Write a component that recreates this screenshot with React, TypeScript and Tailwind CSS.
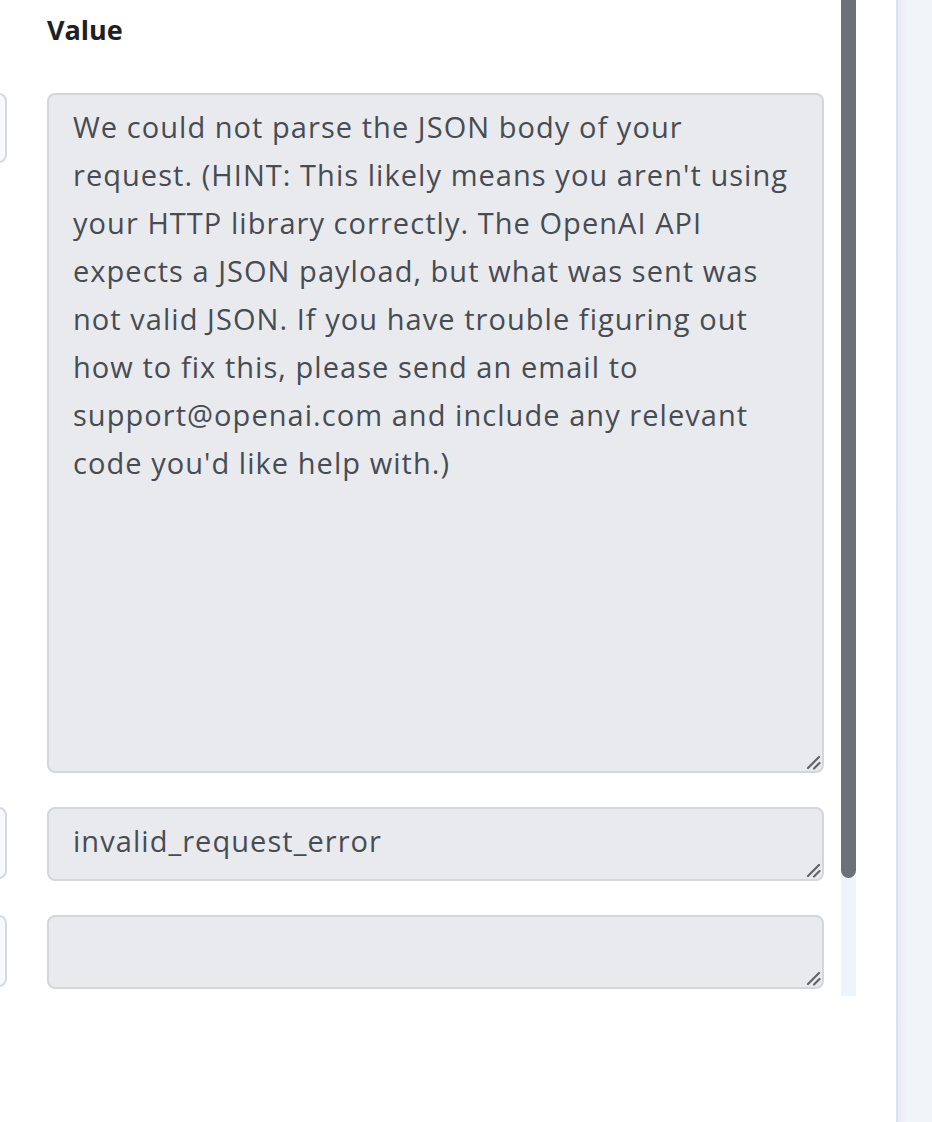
import React from 'react';

const message =
  "We could not parse the JSON body of your\nrequest. (HINT: This likely means you aren't using\nyour HTTP library correctly. The OpenAI API\nexpects a JSON payload, but what was sent was\nnot valid JSON. If you have trouble figuring out\nhow to fix this, please send an email to\nsupport@openai.com and include any relevant\ncode you'd like help with.)";

const fieldClass =
  "block w-full h-full resize-none overflow-hidden rounded-[8px] border-2 border-[#d3d6da] bg-[#e9eaee] pl-[24px] pr-[12px] pt-[8px] font-['Open_Sans','Liberation_Sans',sans-serif] text-[29px] tracking-[1.05px] leading-[48px] text-[#474c53] outline-none";

function KeyStub({ h }: { h: string }) {
  return <div className={`w-[200px] ml-[-193px] shrink-0 rounded-[8px] border-2 border-[#d6dadf] bg-[#f6f8fb] ${h}`} />;
}

function Field({ value, h }: { value: string; h: string }) {
  return (
    <div className={`relative w-[777px] shrink-0 ${h}`}>
      <textarea readOnly wrap="off" className={fieldClass} value={value} />
      {/* resize grip */}
      <svg className="absolute right-[3px] bottom-[3px] w-[15px] h-[15px] pointer-events-none" viewBox="0 0 15 15">
        <path d="M2 13 L13 2 M8 13.5 L13.5 8" stroke="#626467" strokeWidth="2.2" strokeLinecap="round" />
      </svg>
    </div>
  );
}

export default function App() {
  return (
    <div className="flex w-[932px] h-[1122px] bg-white font-['Open_Sans','Liberation_Sans',sans-serif] overflow-hidden">
      <div className="flex flex-col w-[896px] shrink-0">
        <div className="flex h-[996px] w-[856px]">
          <div className="w-[841px] shrink-0 overflow-hidden">
            <div className="pl-[47px] pt-[11px] h-[93px]">
              <h3 className="text-[27px] font-bold text-[#1d2125] leading-[38px]">Value</h3>
            </div>
            <div className="flex gap-[40px]">
              <KeyStub h="h-[70px]" />
              <Field value={message} h="h-[680px]" />
            </div>
            <div className="flex gap-[40px] mt-[34px]">
              <KeyStub h="h-[72px]" />
              <Field value="invalid_request_error" h="h-[74px]" />
            </div>
            <div className="flex gap-[40px] mt-[34px]">
              <KeyStub h="h-[72px]" />
              <Field value="" h="h-[74px]" />
            </div>
          </div>
          {/* scrollbar */}
          <div className="flex flex-col w-[15px] bg-[#eef4fc]">
            <div className="h-[878px] rounded-b-[8px] bg-[#6b7178]" />
          </div>
        </div>
      </div>
      <div className="flex-1 border-l-2 border-[#d8e1f7] bg-gradient-to-r from-[#e8ebf0] to-[#f1f4f8] to-[30%]" />
    </div>
  );
}
